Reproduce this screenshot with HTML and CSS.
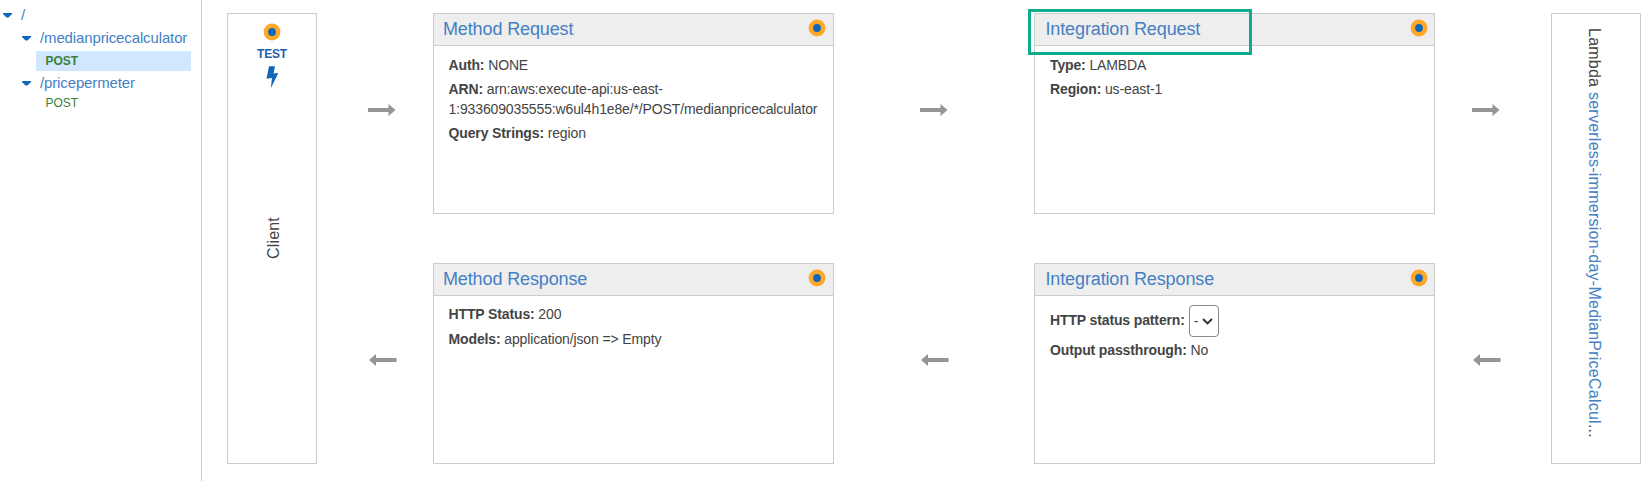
FILE: index.html
```html
<!DOCTYPE html>
<html lang="en">
<head>
<meta charset="utf-8">
<title>Method Execution</title>
<link rel="stylesheet" href="styles.css">
</head>
<body>
<svg class="defs" width="0" height="0">
  <symbol id="right" viewBox="0 0 28 12"><path d="M0 4h20.5V0L27.5 6l-7 6V8H0z"/></symbol>
  <symbol id="left" viewBox="0 0 28 12"><path d="M27.5 4H7V0L0 6l7 6V8h20.5z"/></symbol>
  <symbol id="dot" viewBox="0 0 18 18"><circle cx="9" cy="9" r="8.4" fill="#ffa726"/><circle cx="9" cy="9" r="3.9" fill="#1166bb"/></symbol>
  <symbol id="caret" viewBox="0 0 9 5"><path d="M0 0h9v1L5.5 4.6h-2L0 1z"/></symbol>
</svg>
<div class="app">
  <nav class="tree">
    <a class="node root"><svg class="caret"><use href="#caret"/></svg><span>/</span></a>
    <a class="node child"><svg class="caret"><use href="#caret"/></svg><span>/medianpricecalculator</span></a>
    <a class="method selected">POST</a>
    <a class="node child second"><svg class="caret"><use href="#caret"/></svg><span>/pricepermeter</span></a>
    <a class="method">POST</a>
  </nav>
  <main class="flow">
    <section class="end client">
      <svg class="dot"><use href="#dot"/></svg>
      <span class="test">TEST</span>
      <svg class="bolt" viewBox="0 0 13 23"><path d="M3 0.3H9L7.6 7.6 12.4 7 4.8 22.3 6 12 0.5 12.8z"/></svg>
      <span class="client-label">Client</span>
    </section>
    <div class="arrows a1"><svg class="arrow"><use href="#right"/></svg><svg class="arrow back"><use href="#left"/></svg></div>
    <div class="column">
      <section class="card">
        <header class="head"><h2>Method Request</h2><svg class="dot"><use href="#dot"/></svg></header>
        <div class="body">
          <p><b>Auth:</b> NONE</p>
          <p><b>ARN:</b> <span class="arn">arn:aws:execute-api:us-east-<br>1:933609035555:w6ul4h1e8e/*/POST/medianpricecalculator</span></p>
          <p><b>Query Strings:</b> region</p>
        </div>
      </section>
      <section class="card">
        <header class="head"><h2>Method Response</h2><svg class="dot"><use href="#dot"/></svg></header>
        <div class="body response">
          <p><b>HTTP Status:</b> 200</p>
          <p><b>Models:</b> application/json =&gt; Empty</p>
        </div>
      </section>
    </div>
    <div class="arrows a2"><svg class="arrow"><use href="#right"/></svg><svg class="arrow back"><use href="#left"/></svg></div>
    <div class="column">
      <section class="card integration">
        <header class="head"><h2>Integration Request</h2><svg class="dot"><use href="#dot"/></svg></header>
        <div class="body">
          <p><b>Type:</b> LAMBDA</p>
          <p><b>Region:</b> us-east-1</p>
        </div>
        <div class="highlight"></div>
      </section>
      <section class="card integration">
        <header class="head"><h2>Integration Response</h2><svg class="dot"><use href="#dot"/></svg></header>
        <div class="body pattern">
          <p class="pick"><b>HTTP status pattern:</b><span class="select">-<svg class="chevron" viewBox="0 0 11 7"><path d="M1 1l4.5 4.4L10 1"/></svg></span></p>
          <p><b>Output passthrough:</b> No</p>
        </div>
      </section>
    </div>
    <div class="arrows a3"><svg class="arrow"><use href="#right"/></svg><svg class="arrow back"><use href="#left"/></svg></div>
    <section class="end lambda"><span class="lambda-label">Lambda <a>serverless-immersion-day-MedianPriceCalcul</a>...</span></section>
  </main>
</div>
</body>
</html>
```
FILE: styles.css
```css
* { box-sizing: border-box; }
html, body { height: 481px; overflow: hidden; }
body { margin: 0; background: #fff; color: #444; font: 14px/20px "Liberation Sans", Arial, sans-serif; }
.defs { position: absolute; }
svg { display: block; flex: none; }
.app { display: flex; height: 481px; }

.tree { width: 202px; flex: none; border-right: 1px solid #ccc; padding-top: 5px; }
.node { display: flex; align-items: center; height: 20px; color: #4480c4; font-size: 15px; letter-spacing: -0.13px; }
.root { padding-left: 3px; gap: 9px; }
.child { padding-left: 22px; gap: 9px; margin-top: 3px; }
.second { margin-top: 2px; }
.caret { width: 9px; height: 5px; fill: #1166bb; }
.method { display: block; width: 155px; height: 20px; margin-left: 36px; padding-left: 9.5px; color: #3b803b; font-size: 12px; line-height: 21px; }
.selected { margin-top: 3px; line-height: 20px; background: #d0e7ff; font-weight: bold; }

.flow { display: flex; padding: 13px 0 17px 25px; }
.end { width: 90px; height: 451px; flex: none; border: 1px solid #ccc; display: flex; flex-direction: column; align-items: center; }
.dot { width: 18px; height: 18px; }
.client .dot { margin: 9px 0 0 -1px; }
.test { margin-top: 4px; height: 18px; line-height: 18px; font-size: 12px; letter-spacing: -0.2px; font-weight: bold; color: #1f5fae; }
.bolt { width: 13px; height: 23px; margin-top: 3px; fill: #1166bb; }
.client-label { margin: 128px 0 0 3px; writing-mode: vertical-rl; transform: rotate(180deg); font-size: 16px; letter-spacing: 0.2px; }
.lambda-label { margin-top: 14px; margin-right: 5px; writing-mode: vertical-rl; white-space: nowrap; font-size: 16px; letter-spacing: 0.24px; }
.lambda-label a { color: #4480c4; }

.arrows { flex: none; padding-top: 91px; }
.a1 { width: 116px; padding-left: 51px; }
.a2 { width: 200px; padding-left: 86px; }
.a3 { width: 116px; padding-left: 37px; }
.arrow { width: 28px; height: 12px; fill: #949494; }
.back { margin: 238px 0 0 1px; }

.column { width: 401px; flex: none; display: flex; flex-direction: column; gap: 49px; }
.card { position: relative; height: 201px; border: 1px solid #ccc; }
.head { display: flex; justify-content: space-between; height: 32px; padding: 5px 7px 0 9px; background: #eee; border-bottom: 1px solid #ccc; }
.head h2 { margin: 0; font-size: 18px; font-weight: normal; line-height: 20px; letter-spacing: -0.13px; color: #4480c4; }
.integration .head { padding-left: 10.5px; padding-right: 6px; }
.body { padding: 9px 0 0 14.5px; white-space: nowrap; letter-spacing: -0.13px; }
.body p { margin: 0 0 4px; }
.integration .body { padding-left: 15px; }
.body.response { padding-top: 8px; }
.response p { margin-bottom: 5px; }
.body.pattern { padding-top: 9px; }
.pick { display: flex; height: 32px; gap: 4px; line-height: 30px; }
.body .pick { margin-bottom: 3px; }
.select { display: flex; align-items: center; gap: 4px; width: 30px; height: 32px; padding-left: 4px; border: 1px solid #888; border-radius: 4px; background: #fff; }
.chevron { width: 11px; height: 7px; fill: none; stroke: #333; stroke-width: 2; }
.highlight { position: absolute; left: -7px; top: -5px; width: 224px; height: 46px; border: 3px solid #0cad8c; }
```
